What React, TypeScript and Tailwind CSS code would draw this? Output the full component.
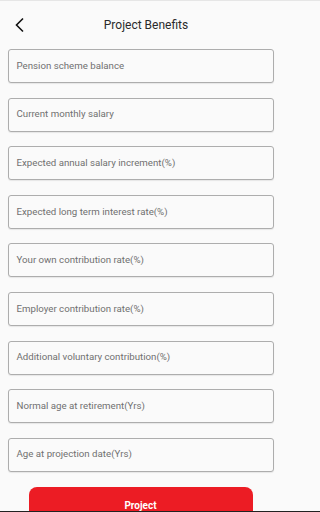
const fields = [
  "Pension scheme balance",
  "Current monthly salary",
  "Expected annual salary increment(%)",
  "Expected long term interest rate(%)",
  "Your own contribution rate(%)",
  "Employer contribution rate(%)",
  "Additional voluntary contribution(%)",
  "Normal age at retirement(Yrs)",
  "Age at projection date(Yrs)",
];

export default function App() {
  return (
    <div
      className="flex h-[512px] w-full flex-col overflow-hidden border-t border-b border-t-[#e6e6e6] border-b-[#222] bg-[#fafafa]"
      style={{ fontFamily: "Roboto, 'Noto Sans', sans-serif" }}
    >
      <div className="w-[281px] shrink-0">
        <header className="relative flex h-[48px] items-center justify-center pl-[11px]">
          <button className="absolute left-[14px] top-[16px] text-[#111]">
            <svg width="12" height="16" viewBox="0 0 12 16" fill="none">
              <path d="M9 1.5 L2.5 8 L9 14.5" stroke="currentColor" strokeWidth="1.6" />
            </svg>
          </button>
          <h1 className="text-[12px] text-[#2a2a2a]">Project Benefits</h1>
        </header>
        <div className="flex flex-col gap-[14.6px] px-[7.5px]">
          {fields.map((f) => (
            <div
              key={f}
              className="flex h-[34px] shrink-0 items-center rounded-[3px] border border-[#adadad] bg-[#fafafa] px-[8px] text-[9.7px] text-[#707070] shadow-[0_1px_1px_rgba(0,0,0,0.08)]"
            >
              {f}
            </div>
          ))}
        </div>
        <div className="mt-[15px] flex justify-center">
          <button className="h-[36px] w-[224px] shrink-0 rounded-[8px] bg-[#ec1c24] pt-[1px] text-[10px] font-bold text-white">
            Project
          </button>
        </div>
      </div>
    </div>
  );
}
